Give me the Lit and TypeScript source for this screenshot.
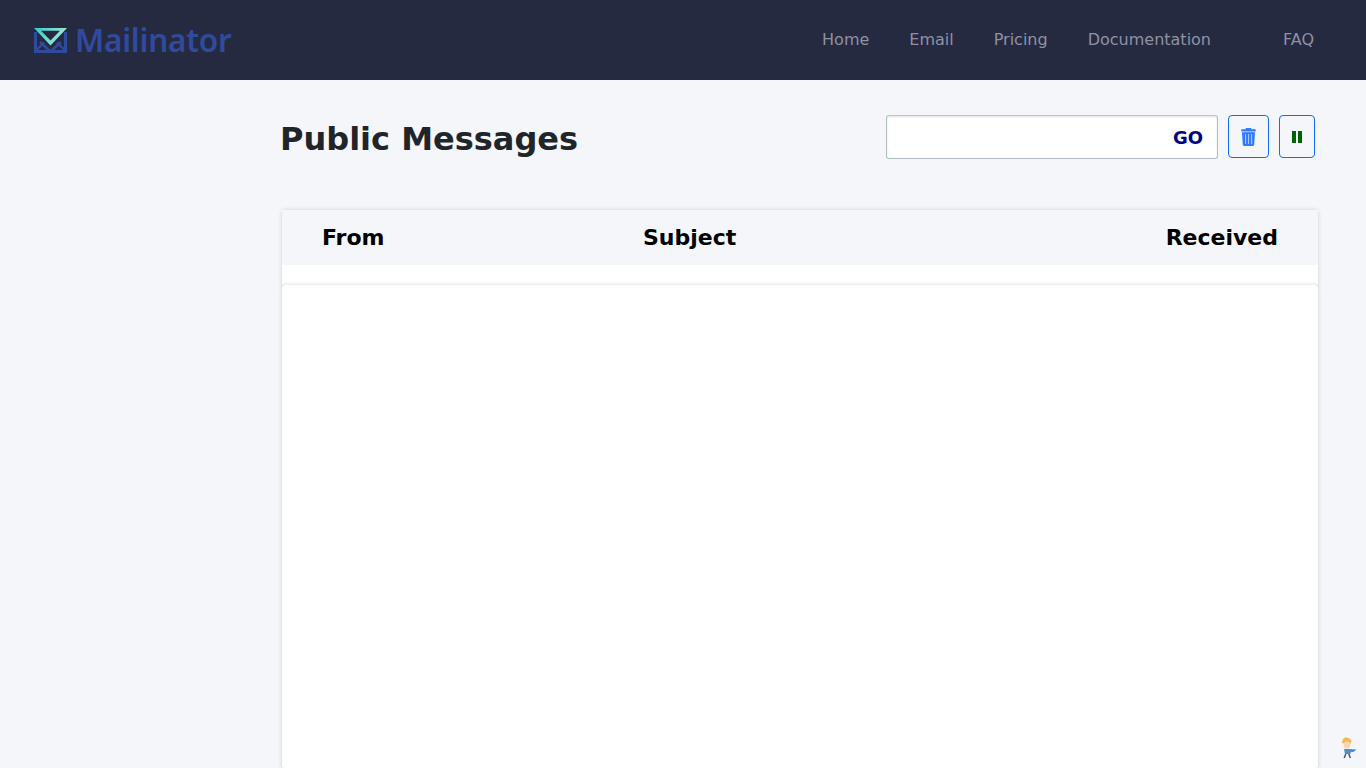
import { LitElement, html, css } from "lit";
import { customElement } from "lit/decorators.js";

@customElement("app-root")
export class AppRoot extends LitElement {
  static styles = css`
    :host { display: block; height: 768px; overflow: hidden; background: #f4f6fa; font-family: "DejaVu Sans", sans-serif; position: relative; }
    .nav { height: 80px; background: #252a41; display: flex; align-items: center; justify-content: space-between; padding: 0 52px 0 33px; box-sizing: border-box; }
    .brand { display: flex; align-items: center; gap: 7px; }
    .brand svg { display: block; }
    .brand span { font-family: "Noto Sans", sans-serif; font-weight: 600; font-size: 31.5px; line-height: 40px; color: #2f4a9f; letter-spacing: -0.25px; }
    .links { display: flex; align-items: center; font-size: 16px; color: #8f91a1; }
    .links a { margin-left: 40px; line-height: 24px; }
    .links a.faq { margin-left: 72px; }
    .main { padding: 35px 48px 0 280px; }
    .head { display: flex; justify-content: space-between; align-items: flex-start; padding-right: 3px; }
    h1 { margin: 0; font-size: 32px; line-height: 48px; font-weight: 700; color: #212529; }
    .tools { display: flex; align-items: flex-start; gap: 10px; }
    .search { width: 332px; height: 44px; box-sizing: border-box; background: #fff; border: 1px solid #aebfc4; border-top-color: #c0c2c9; border-radius: 3px; box-shadow: inset 0 1px 2px rgba(0,0,0,.12); display: flex; align-items: center; justify-content: flex-end; padding-right: 14px; font-size: 18px; font-weight: 700; color: #000080; }
    .btn { height: 43px; box-sizing: border-box; border: 1px solid #0d6efd; border-radius: 4px; display: flex; align-items: center; justify-content: center; background: #f4f6fa; }
    .trash { width: 41px; }
    .pause { width: 36px; }
    .card { background: #fff; box-shadow: 0 0 4px rgba(0,0,0,.16); margin-left: 2px; }
    .top { margin-top: 47px; height: 75px; border-radius: 3px 3px 0 0; }
    .cols { height: 55px; background: #f4f6fa; display: grid; grid-template-columns: 321px 1fr auto; align-items: center; padding: 0 40px; font-size: 22px; font-weight: 700; color: #000; }
    .body { height: 483px; border-radius: 3px; }
    .sprite { position: absolute; right: 9px; bottom: 9px; display: block; filter: blur(0.4px); }
  `;

  render() {
    return html`
      <div class="nav">
        <div class="brand">
          <svg width="35" height="26" viewBox="0 0 35 26" aria-hidden="true">
            <defs>
              <linearGradient id="g" x1="0" y1="0" x2="1" y2="0.3">
                <stop offset="0" stop-color="#35c9c4" />
                <stop offset="1" stop-color="#a5e8d8" />
              </linearGradient>
            </defs>
            <path d="M2.500 5V24.500H32.500V5" fill="none" stroke="#2f4a9f" stroke-width="3.200" />
            <path d="M3 23.500L11 15.500M32 23.500L24 15.500" fill="none" stroke="#2f4a9f" stroke-width="2.400" />
            <path d="M7 15L17.500 24.500L28 15" fill="none" stroke="#2f4a9f" stroke-width="2.800" />
            <path d="M1 1H34L17.500 18.500ZM8 3.800L17.500 13.600L27 3.800Z" fill="url(#g)" fill-rule="evenodd" />
          </svg>
          <span>Mailinator</span>
        </div>
        <div class="links">
          <a>Home</a><a>Email</a><a>Pricing</a><a>Documentation</a><a class="faq">FAQ</a>
        </div>
      </div>
      <div class="main">
        <div class="head">
          <h1>Public Messages</h1>
          <div class="tools">
            <div class="search">GO</div>
            <div class="btn trash">
              <svg width="15" height="18" viewBox="0 0 15 18" aria-hidden="true">
                <path fill="#2f7bff" d="M5 0h5l.5 1.300h4.200V3.400H.3V1.300h4.200zM1 4.200h13l-.8 12.600c0 .7-.6 1.200-1.200 1.200H3c-.6 0-1.200-.5-1.200-1.200z" />
                <path fill="#a5c8ff" d="M4 6h1.100v10H4zM7 6h1.100v10H7zM10 6h1.100v10H10z" />
              </svg>
            </div>
            <div class="btn pause">
              <svg width="10" height="12" viewBox="0 0 10 12" aria-hidden="true">
                <path fill="#006400" d="M0 0h4v12H0zM6 0h4v12H6z" />
              </svg>
            </div>
          </div>
        </div>
        <div class="card top">
          <div class="cols"><span>From</span><span>Subject</span><span>Received</span></div>
        </div>
        <div class="card body"></div>
      </div>
      <svg class="sprite" width="16" height="22" viewBox="0 0 16 22" aria-hidden="true">
        <path d="M1 6c0-3 2-6 4.500-5.500 2.500.3 5 1.500 5 4.500l-1 1.500H3z" fill="#f0b95c" />
        <circle cx="6" cy="8" r="3.400" fill="#f6d6ac" />
        <path d="M3 12h6l6.500 0.500-3 2.500-3 .3V17H4z" fill="#4f8fc7" />
        <path d="M4.800 17l-1.600 4M7.800 17l1.600 4" stroke="#50566a" stroke-width="1.500" />
      </svg>
    `;
  }
}
